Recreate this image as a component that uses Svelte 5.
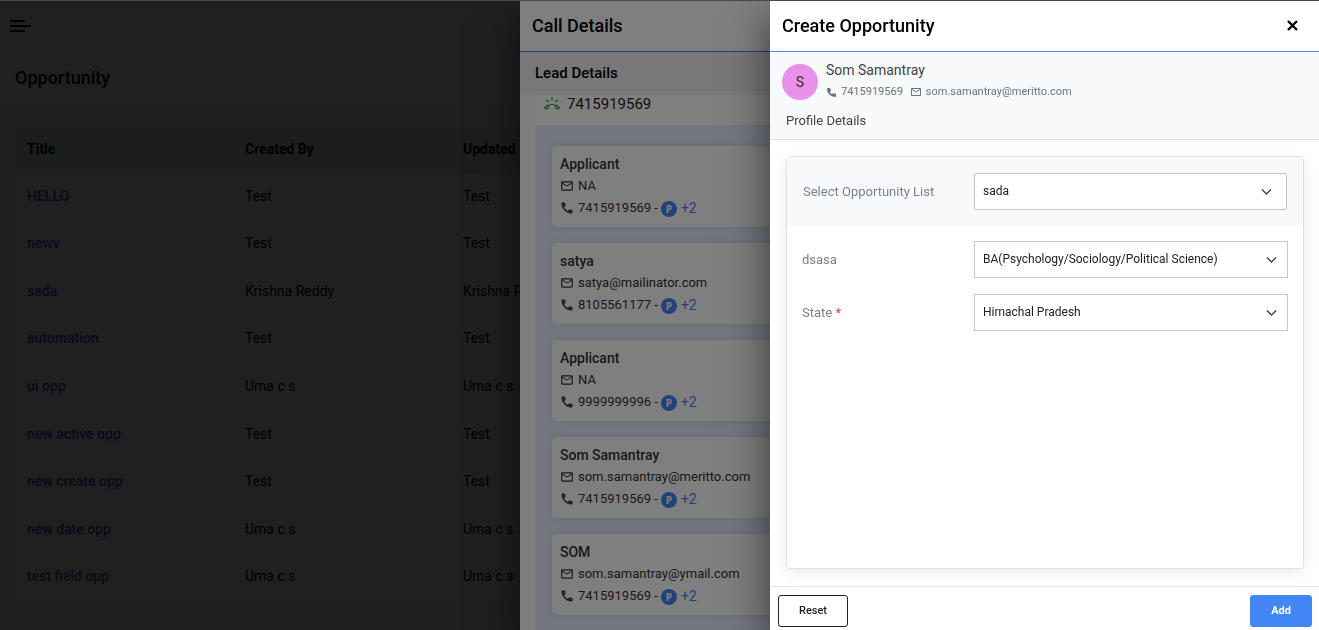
<script>
  const opportunities = [
    { title: 'HELLO', user: 'Test' },
    { title: 'newv', user: 'Test' },
    { title: 'sada', user: 'Krishna Reddy' },
    { title: 'automation', user: 'Test' },
    { title: 'ui opp', user: 'Uma c s' },
    { title: 'new active opp', user: 'Test' },
    { title: 'new create opp', user: 'Test' },
    { title: 'new date opp', user: 'Uma c s' },
    { title: 'test field opp', user: 'Uma c s' }
  ];

  const leads = [
    { name: 'Applicant', email: 'NA', phone: '7415919569' },
    { name: 'satya', email: 'satya@mailinator.com', phone: '8105561177' },
    { name: 'Applicant', email: 'NA', phone: '9999999996' },
    { name: 'Som Samantray', email: 'som.samantray@meritto.com', phone: '7415919569' },
    { name: 'SOM', email: 'som.samantray@ymail.com', phone: '7415919569' }
  ];
</script>

{#snippet mail(size)}
  <svg class="icon" width={size} height={size} viewBox="0 0 24 24" aria-hidden="true">
    <path fill="currentColor" d="M20 4H4c-1.100 0-2 .9-2 2v12c0 1.100.9 2 2 2h16c1.100 0 2-.9 2-2V6c0-1.100-.9-2-2-2zm0 14H4V8l8 5 8-5v10zm-8-7L4 6h16l-8 5z" />
  </svg>
{/snippet}

{#snippet chevron()}
  <svg class="chevron" width="12" height="8" viewBox="0 0 12 8" aria-hidden="true">
    <path d="M1 1.500 5.500 6l4.500-4.500" fill="none" stroke="#444" stroke-width="1.400" />
  </svg>
{/snippet}

<div class="page">
  <header class="topbar">
    <button class="menu" aria-label="Menu">
      <svg width="21" height="12" viewBox="0 0 21 12" aria-hidden="true">
        <path d="M1 1h13M1 6h19M1 11h13" stroke="#00001c" stroke-width="2" stroke-linecap="round" />
      </svg>
    </button>
  </header>
  <div class="titlebar"><h1>Opportunity</h1></div>
  <main>
    <table>
      <thead>
        <tr><th>Title</th><th>Created By</th><th>Updated By</th></tr>
      </thead>
      <tbody>
        {#each opportunities as o}
          <tr>
            <td><a href="#top">{o.title}</a></td>
            <td>{o.user}</td>
            <td>{o.user}</td>
          </tr>
        {/each}
      </tbody>
    </table>
  </main>
</div>
<div class="backdrop deep"></div>

<section class="drawer call">
  <header class="drawer-head"><h2>Call Details</h2></header>
  <h3>Lead Details</h3>
  <div class="lead">
    <div class="number">
      <svg width="16" height="16" viewBox="0 0 24 24" aria-hidden="true">
        <path fill="#37a33c" d="M23.710 16.670C20.660 13.780 16.540 12 12 12 7.460 12 3.340 13.780.29 16.670c-.18.18-.29.43-.29.71 0 .28.11.53.29.71l2.480 2.480c.18.18.43.29.71.29.27 0 .52-.11.7-.28.79-.74 1.690-1.360 2.660-1.850.33-.16.56-.5.56-.9v-3.100c1.450-.48 3-.73 4.600-.73s3.150.25 4.600.72v3.100c0 .39.23.74.56.9.98.49 1.870 1.120 2.660 1.850.18.18.43.28.7.28.28 0 .53-.11.71-.29l2.480-2.480c.18-.18.29-.43.29-.71 0-.28-.12-.53-.3-.71zM21.160 6.260l-1.410-1.410-3.560 3.550 1.410 1.410s3.450-3.520 3.560-3.550zM13 2h-2v5h2V2zM6.400 9.810L7.810 8.400 4.260 4.840 2.840 6.260c.11.03 3.560 3.550 3.560 3.550z" />
        <path fill="#fff" d="M5.500 15.900v1.400c-.8.45-1.500.9-2.100 1.400l-1.200-1.200c1-.7 2.100-1.200 3.300-1.600zM18.500 15.900v1.400c.8.45 1.500.9 2.100 1.400l1.200-1.200c-1-.7-2.100-1.200-3.300-1.600z" />
      </svg>
      <span>7415919569</span>
    </div>
    <div class="cards">
      {#each leads as lead}
        <article>
          <h4>{lead.name}</h4>
          <p>{@render mail(14)}<span>{lead.email}</span></p>
          <p>
            <svg class="icon" width="14" height="14" viewBox="0 0 24 24" aria-hidden="true">
              <path fill="currentColor" stroke="currentColor" stroke-width=".8" d="M6.540 5c.06.89.21 1.760.45 2.590l-1.200 1.200c-.41-1.200-.67-2.470-.76-3.790h1.510m9.860 12.020c.85.24 1.720.39 2.600.45v1.490c-1.320-.09-2.590-.35-3.800-.75l1.200-1.190M7.500 3H4c-.55 0-1 .45-1 1 0 9.390 7.610 17 17 17 .55 0 1-.45 1-1v-3.490c0-.55-.45-1-1-1-1.240 0-2.450-.2-3.570-.57-.1-.04-.21-.05-.31-.05-.26 0-.51.1-.71.29l-2.200 2.200c-2.830-1.450-5.150-3.760-6.590-6.590l2.200-2.200c.28-.28.36-.67.25-1.020C8.700 6.450 8.500 5.250 8.500 4c0-.55-.45-1-1-1z" />
            </svg>
            <span>{lead.phone} -</span>
            <span class="source">
              <b class="badge">P</b>
              <a class="more" href="#top">+2</a>
            </span>
          </p>
        </article>
      {/each}
    </div>
  </div>
</section>
<div class="backdrop"></div>

<section class="drawer create">
  <header class="drawer-head">
    <h2>Create Opportunity</h2>
    <button class="close" aria-label="Close">
      <svg width="11" height="11" viewBox="0 0 11 11" aria-hidden="true">
        <path d="M1 1l9 9M10 1l-9 9" stroke="#000" stroke-width="2.400" />
      </svg>
    </button>
  </header>

  <div class="profile">
    <div class="person">
      <div class="avatar">S</div>
      <div>
        <div class="name">Som Samantray</div>
        <div class="meta">
          <svg class="icon" width="11" height="11" viewBox="0 0 24 24" aria-hidden="true">
            <path fill="currentColor" d="M20 22l2-2v-5l-6-2-3 3c-2-1-4-3-5-5l3-3-2-6H4L2 4c0 10 8 18 18 18z" />
          </svg>
          <span>7415919569</span>
          {@render mail(12)}
          <span>som.samantray@meritto.com</span>
        </div>
      </div>
    </div>
    <div class="sub">Profile Details</div>
  </div>

  <form id="opportunity">
    <div class="form-card">
      <div class="row top">
        <label for="list">Select Opportunity List</label>
        <div class="field">
          <select id="list"><option>sada</option></select>
          {@render chevron()}
        </div>
      </div>
      <div class="rows">
        <div class="row">
          <label for="dsasa">dsasa</label>
          <div class="field">
            <select id="dsasa"><option>BA(Psychology/Sociology/Political Science)</option></select>
            {@render chevron()}
          </div>
        </div>
        <div class="row">
          <label for="state">State <em>*</em></label>
          <div class="field">
            <select id="state"><option>Himachal Pradesh</option></select>
            {@render chevron()}
          </div>
        </div>
      </div>
    </div>
  </form>

  <footer>
    <button class="btn" type="reset" form="opportunity">Reset</button>
    <button class="btn add" type="button">Add</button>
  </footer>
</section>

<style>
  :global(body) {
    background: #4a4a4a;
    overflow: hidden;
    font-family: Roboto, "Liberation Sans", sans-serif;
    color: #000;
  }
  h1, h2, h3, h4, p { margin: 0; font-weight: 500; }
  button { font-family: inherit; cursor: pointer; }
  a { text-decoration: none; }

  .page {
    height: 100vh;
    overflow: hidden;
    border-top: 1px solid #4a4a4a;
    background: #f8f8f8;
    font-size: 14px;
  }
  .topbar {
    display: flex;
    align-items: center;
    height: 50px;
    padding: 0 10px;
    background: #fff;
    border-bottom: 1px solid #eee;
  }
  .menu {
    display: flex;
    padding: 0;
    border: 0;
    background: none;
  }
  .titlebar {
    display: flex;
    align-items: center;
    height: 51px;
    padding: 0 15px;
    background: #fff;
    border-bottom: 1px solid #eee;
  }
  h1, h2 { font-size: 18px; line-height: 20px; }
  main { padding: 23px 15px; }
  table {
    width: 100%;
    table-layout: fixed;
    border-spacing: 0;
    background: #fff;
    line-height: 1.4;
  }
  th, td { padding: 13px 12px 14px; text-align: left; border-bottom: 1px solid #f2f2f2; }
  th { padding-bottom: 13px; background: #e0e8e6; font-weight: 700; }
  th:nth-child(-n + 2) { width: 194px; }
  td a { color: #2a62d0; font-weight: 500; }

  .backdrop {
    position: fixed;
    inset: 1px 0 0;
    background: rgb(0 0 0 / 50%);
  }
  .backdrop.deep { background: rgb(0 0 0 / 75%); }

  .drawer {
    position: fixed;
    top: 1px;
    right: 0;
    bottom: 0;
    max-width: 100%;
    display: flex;
    flex-direction: column;
    overflow: hidden;
    background: #fff;
    box-shadow: 0 16px 40px rgb(0 0 0 / 60%);
    clip-path: inset(0 0 0 -80px);
  }
  .call { width: 799px; }
  .create { width: 549px; }
  .drawer-head {
    display: flex;
    align-items: center;
    justify-content: space-between;
    height: 50px;
    flex: none;
    padding: 0 21px 0 12px;
    border-bottom: 1px solid #4285f4;
  }
  .close {
    display: flex;
    padding: 0 0 1px;
    border: 0;
    background: none;
  }

  h3 {
    padding: 0 15px;
    background: #f0f0f0;
    font-size: 15px;
    line-height: 43px;
  }
  .lead {
    flex: 1;
    margin-left: 15px;
    background: #e6eeff;
    overflow: hidden;
  }
  .call { background: #fafafa; }
  .call .drawer-head { background: #fff; }
  .number {
    display: flex;
    align-items: center;
    gap: 7px;
    height: 18px;
    padding: 0 9px 12px;
    background: #fff;
    color: #222;
    font-size: 15px;
  }
  .cards {
    display: flex;
    flex-direction: column;
    gap: 16px;
    padding: 21px 17px;
  }
  article {
    padding: 7px 8px 8px;
    border-radius: 5px;
    background: #fff;
    box-shadow: 0 0 8px rgb(0 0 0 / 10%);
    color: #333;
    line-height: 22px;
  }
  h4 { font-size: 14px; }
  p {
    display: flex;
    align-items: center;
    gap: 4px;
    font-size: 13px;
    font-weight: 400;
  }
  .icon { flex: none; }
  .source {
    display: flex;
    align-items: center;
    gap: 4px;
    margin-left: -1px;
  }
  .badge {
    width: 16px;
    margin-top: 2px;
    border-radius: 50%;
    background: #4285f4;
    color: #fff;
    font-family: "Open Sans", sans-serif;
    font-size: 10px;
    line-height: 16px;
    text-align: center;
  }
  .more { color: #4285f4; font-size: 14px; }

  .profile {
    padding: 8px 12px 9px;
    background: #f8f9fb;
    border-bottom: 1px solid #dee2e6;
    color: #444;
  }
  .person { display: flex; align-items: center; gap: 8px; }
  .avatar {
    width: 36px;
    border-radius: 50%;
    background: #e991e9;
    color: #333;
    font-size: 14px;
    line-height: 36px;
    text-align: center;
  }
  .name { font-size: 14px; line-height: 20px; }
  .meta {
    display: flex;
    align-items: center;
    gap: 4px;
    color: #6c757d;
    font-size: 11px;
    line-height: 24px;
  }
  .meta span + .icon { margin-left: 3px; }
  .sub { padding: 8px 4px 0; font-size: 13px; line-height: 18px; }

  form {
    flex: 1;
    display: flex;
    padding: 16px 15px 17px 16px;
  }
  .form-card {
    flex: 1;
    border: 1px solid #dee2e6;
    border-radius: 4px;
    box-shadow: 0 4px 16px rgb(0 0 0 / 8%);
  }
  .row {
    display: grid;
    grid-template-columns: 172px 1fr;
    align-items: center;
  }
  .top {
    grid-template-columns: 171px 1fr;
    padding: 16px;
    background: #f8f9fb;
  }
  .rows {
    display: grid;
    gap: 16px;
    padding: 15px;
  }
  label { color: #7a838b; font-size: 13px; }
  em { color: #f44336; font-style: normal; }
  .field { display: grid; align-items: center; }
  .field > :global(*) { grid-area: 1 / 1; }
  select {
    appearance: none;
    width: 100%;
    height: 37px;
    padding: 0 32px 2px 8px;
    border: 1px solid #c4c7ca;
    border-radius: 0;
    background: #fff;
    color: #222;
    font-family: inherit;
    font-size: 12px;
  }
  .top select { border-radius: 2px; }
  .chevron {
    justify-self: end;
    margin-right: 10px;
    pointer-events: none;
  }
  .top .chevron { margin-right: 14px; }

  footer {
    display: flex;
    justify-content: space-between;
    padding: 8px 7px 3px 8px;
    border-top: 1px solid #e4e9ef;
  }
  .btn {
    height: 32px;
    padding: 0 20px 2px;
    border: 1px solid #222;
    border-radius: 3px;
    background: #fff;
    color: #222;
    font-size: 11px;
    font-weight: 500;
  }
  .add {
    border-color: #4285f4;
    background: #4285f4;
    color: #fff;
    font-weight: 700;
  }
</style>
